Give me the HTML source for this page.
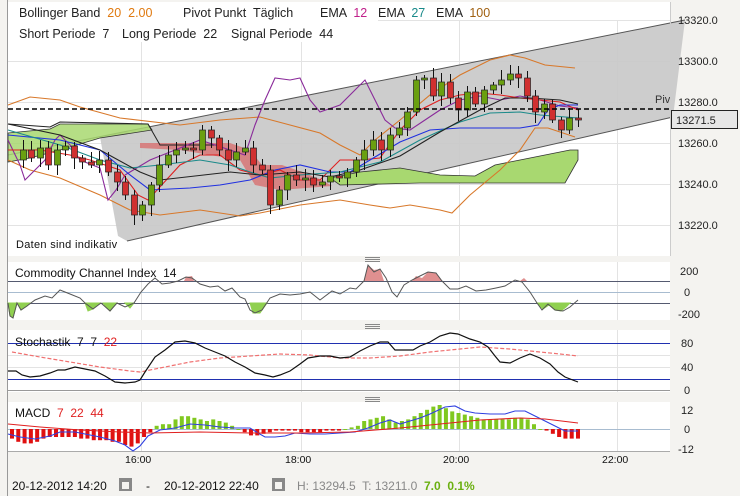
<!DOCTYPE html>
<html><head><meta charset="utf-8"><style>
html,body{margin:0;padding:0;background:#f4f3f0;width:740px;height:496px;overflow:hidden;font-family:"Liberation Sans",sans-serif}
svg{position:absolute;left:0;top:0}
text{white-space:pre}
</style></head><body>
<svg id="s" width="740" height="496" viewBox="0 0 740 496" font-family="Liberation Sans, sans-serif" xml:space="preserve">
<rect x="0" y="0" width="740" height="496" fill="#f4f3f0"/>
<line x1="7.5" y1="0" x2="7.5" y2="496" stroke="#999"/>
<rect x="8" y="2" width="662" height="254" fill="#fff"/>
<g stroke="#e3e3e3" stroke-width="1">
<line x1="8" y1="20.5" x2="670" y2="20.5"/><line x1="8" y1="61.5" x2="670" y2="61.5"/><line x1="8" y1="102.5" x2="670" y2="102.5"/><line x1="8" y1="143.5" x2="670" y2="143.5"/><line x1="8" y1="184.5" x2="670" y2="184.5"/><line x1="8" y1="225.5" x2="670" y2="225.5"/>
<line x1="141.5" y1="2" x2="141.5" y2="256"/><line x1="301.5" y1="2" x2="301.5" y2="256"/><line x1="459.5" y1="2" x2="459.5" y2="256"/><line x1="617.5" y1="2" x2="617.5" y2="256"/>
</g>
<polygon points="100,137 685,20 673,117 127,241 118,236" fill="#c8c8c8" fill-opacity="0.9"/>
<line x1="8" y1="155" x2="685" y2="20" stroke="#555" stroke-width="1"/>
<line x1="127" y1="241" x2="673" y2="117" stroke="#555" stroke-width="1"/>
<rect x="8" y="2" width="660" height="18" fill="#fff"/>
<rect x="8" y="20" width="370" height="22" fill="#fff"/>
<g font-size="12.5" fill="#222">
<text x="19" y="17">Bollinger Band  <tspan fill="#e07a10">20  2.00</tspan></text>
<text x="183" y="17">Pivot Punkt  Täglich</text>
<text x="320" y="17">EMA  <tspan fill="#c0208a">12</tspan></text>
<text x="378" y="17">EMA  <tspan fill="#1a8a8a">27</tspan></text>
<text x="436" y="17">EMA  <tspan fill="#a06010">100</tspan></text>
<text x="19" y="38">Short Periode  7</text>
<text x="122" y="38">Long Periode  22</text>
<text x="231" y="38">Signal Periode  44</text>
</g>
<polygon points="8,133 50,129 60,124 148,124 152,130 100,138 60,150 30,158 8,162" fill="#a8d870" fill-opacity="0.85" stroke="#333" stroke-width="0.8"/>
<polygon points="330,178 360,172 400,168 440,175 475,176 495,165 520,160 545,155 570,150 578,150 578,160 565,183 420,183 340,185" fill="#a8d870" stroke="#333" stroke-width="0.8"/>
<polygon points="140,143 230,143 250,150 262,165 282,165 302,172 322,180 332,186 280,190 255,185 240,160 180,150 140,148" fill="#d86a6a" fill-opacity="0.75"/>
<polyline points="8,124 50,127 60,122 148,124 160,145 220,145" fill="none" stroke="#222" stroke-width="1"/>
<g fill="none" stroke-width="1.1">
<polyline stroke="#d8782a" points="8,105 30,97 60,100 80,107 120,118 180,125 220,120 260,117 290,125 320,133 340,145 360,155 375,140 400,120 430,95 460,75 490,60 510,55 525,58 545,65 575,68"/>
<polyline stroke="#d8782a" points="8,160 30,170 60,178 100,195 130,210 160,215 200,210 240,216 260,213 300,205 340,200 370,205 390,208 410,205 440,210 452,213 470,195 500,170 520,150 535,128 548,128 575,137"/>
<polyline stroke="#8a2a9a" points="8,140 20,165 25,180 35,170 45,160 55,140 60,135 70,145 80,160 100,168 108,200 116,190 125,175 150,160 175,150 200,140 230,150 245,155 255,125 265,100 275,78 290,80 300,78 310,100 320,112 340,105 355,90 365,80 375,100 385,120 395,128 410,130 425,120 440,110 460,100 480,96 500,100 520,96 540,100 560,106 578,108"/>
<polyline stroke="#e02020" points="8,150 40,150 70,155 90,160 120,170 138,195 148,200 180,165 200,155 220,155 240,170 260,175 280,170 300,180 320,180 340,160 360,160 380,158 400,130 420,110 440,100 460,95 480,93 500,95 520,98 540,100 560,102 578,110"/>
<polyline stroke="#2030e0" points="8,135 60,140 100,150 130,175 150,190 190,188 220,185 250,180 275,170 300,165 330,172 350,172 370,160 400,142 430,130 460,128 490,128 520,128 538,125 548,110 560,105 578,105"/>
<polyline stroke="#1a8a8a" points="8,130 60,145 100,160 130,168 160,165 200,160 230,165 250,172 270,178 300,175 340,172 380,162 420,140 460,122 490,113 520,112 540,115 578,118"/>
<polyline stroke="#222" points="8,124 60,135 100,150 140,172 160,180 230,172 260,175 300,172 330,177 360,170 400,156 440,132 480,110 505,98 530,98 560,100 578,104"/>
</g>
<g id="candles"></g>
<line x1="8" y1="109" x2="670" y2="109" stroke="#000" stroke-width="1.6" stroke-dasharray="5,3"/>
<text x="655" y="103" font-size="11" fill="#333">Piv</text>
<text x="16" y="248" font-size="11" fill="#111" letter-spacing="0.3">Daten sind indikativ</text>
<line x1="670.5" y1="2" x2="670.5" y2="256" stroke="#ccc"/>
<g font-size="11" fill="#222">
<text x="678" y="24">13320.0</text><text x="678" y="65">13300.0</text><text x="678" y="106">13280.0</text><text x="678" y="147">13260.0</text><text x="678" y="188">13240.0</text><text x="678" y="229">13220.0</text>
</g>
<rect x="671.5" y="110.5" width="66" height="18" fill="#e6e6e6" stroke="#222"/>
<text x="676" y="124" font-size="11" fill="#222">13271.5</text>

<g stroke="#888"><line x1="365" y1="257.5" x2="380" y2="257.5"/><line x1="365" y1="259.5" x2="380" y2="259.5"/><line x1="365" y1="261.5" x2="380" y2="261.5"/></g>
<rect x="8" y="262" width="662" height="58" fill="#fff"/>
<g stroke="#e3e3e3"><line x1="141.5" y1="262" x2="141.5" y2="320"/><line x1="301.5" y1="262" x2="301.5" y2="320"/><line x1="459.5" y1="262" x2="459.5" y2="320"/><line x1="617.5" y1="262" x2="617.5" y2="320"/></g>
<line x1="8" y1="281.5" x2="670" y2="281.5" stroke="#555a70"/>
<line x1="8" y1="292.5" x2="670" y2="292.5" stroke="#a8bcd0"/>
<line x1="8" y1="303.5" x2="670" y2="303.5" stroke="#555a70"/>
<path d="M8,303 L10,316 L13,318 L17,303 L21,310 L27,306 L30,303Z M85,303 L88,311 L93,309 L97,305 L101,303Z M103,303 L106,307 L110,311 L114,306 L117,303Z M125,303 L130,308 L134,303Z M250,303 L253,313 L260,313 L267,303Z M537,303 L543,309 L549,305 L555,310 L561,311 L566,307 L570,303Z" fill="#90d050" stroke="#90d050"/>
<path d="M364,281 L368,265 L374,270 L380,269 L384,281Z M184,281 L186,277 L192,276 L194,281Z M412,281 L416,276 L422,278 L428,272 L436,273 L442,281Z M520,281 L524,278 L527,281Z" fill="#e09090"/>
<polyline fill="none" stroke="#555" stroke-width="1" points="8,303 10,316 13,318 17,303 21,310 27,306 35,300 45,296 52,298 60,290 70,294 80,298 85,303 93,309 101,303 110,311 117,303 125,307 134,303 141,292 148,284 155,278 162,284 170,283 178,281 186,277 192,278 200,284 210,287 218,286 225,291 232,288 240,297 245,299 250,310 255,313 262,310 270,298 280,294 290,295 300,294 310,292 320,300 332,291 340,294 350,288 356,289 364,281 368,265 374,272 380,269 386,278 392,292 397,297 404,285 412,280 420,276 428,272 436,273 442,281 450,289 458,289 466,286 476,291 486,290 496,288 505,286 515,280 522,282 530,292 537,303 542,310 548,304 555,310 563,311 570,307 578,300"/>
<g font-size="11" fill="#222"><text x="680" y="275">200</text><text x="684" y="296">0</text><text x="678" y="318">-200</text></g>
<text x="15" y="277" font-size="12" fill="#111">Commodity Channel Index  14</text>

<g stroke="#888"><line x1="365" y1="324.5" x2="380" y2="324.5"/><line x1="365" y1="326.5" x2="380" y2="326.5"/><line x1="365" y1="328.5" x2="380" y2="328.5"/></g>
<rect x="8" y="330" width="662" height="62" fill="#fff"/>
<g stroke="#e3e3e3"><line x1="141.5" y1="330" x2="141.5" y2="392"/><line x1="301.5" y1="330" x2="301.5" y2="392"/><line x1="459.5" y1="330" x2="459.5" y2="392"/><line x1="617.5" y1="330" x2="617.5" y2="392"/><line x1="8" y1="367.5" x2="670" y2="367.5"/><line x1="8" y1="355.5" x2="670" y2="355.5"/></g>
<line x1="8" y1="343.5" x2="670" y2="343.5" stroke="#2030b0"/>
<line x1="8" y1="379.5" x2="670" y2="379.5" stroke="#2030b0"/>
<line x1="8" y1="390.5" x2="670" y2="390.5" stroke="#999"/>
<polyline fill="none" stroke="#f07070" stroke-width="1.2" stroke-dasharray="4,2" points="12,352 40,357 70,362 100,367 130,371 140,372 160,368 190,362 220,358 250,356 280,354 310,355 340,358 370,358 400,356 430,352 460,349 480,347 510,349 540,352 560,354 578,356"/>
<polyline fill="none" stroke="#111" stroke-width="1.2" points="8,371 16,371 22,375 30,377 40,376 50,373 58,370 65,370 75,367 85,369 95,371 105,376 115,382 125,383 135,382 140,380 145,372 155,357 165,350 175,342 185,341 195,343 205,348 215,352 225,356 235,362 245,367 255,373 265,375 273,377 280,375 290,371 300,364 308,358 320,356 330,356 340,358 350,357 360,351 370,346 380,342 388,342 395,350 405,350 413,350 420,346 430,342 440,336 450,333 458,334 470,339 480,342 488,347 495,356 500,362 510,363 520,358 530,354 540,358 550,364 558,372 565,377 578,382"/>
<g font-size="11" fill="#222"><text x="681" y="347">80</text><text x="681" y="371">40</text><text x="684" y="394">0</text></g>
<text x="15" y="346" font-size="12" fill="#111">Stochastik  7  7  <tspan fill="#e02020">22</tspan></text>

<g stroke="#888"><line x1="365" y1="397.5" x2="380" y2="397.5"/><line x1="365" y1="399.5" x2="380" y2="399.5"/><line x1="365" y1="401.5" x2="380" y2="401.5"/></g>
<rect x="8" y="402" width="662" height="49" fill="#fff"/>
<g stroke="#e3e3e3"><line x1="141.5" y1="402" x2="141.5" y2="451"/><line x1="301.5" y1="402" x2="301.5" y2="451"/><line x1="459.5" y1="402" x2="459.5" y2="451"/><line x1="617.5" y1="402" x2="617.5" y2="451"/></g>
<line x1="8" y1="429.5" x2="670" y2="429.5" stroke="#a8bcd0"/>
<line x1="8" y1="451.5" x2="670" y2="451.5" stroke="#aaa"/>
<g id="macd"></g>
<polyline fill="none" stroke="#3040e0" stroke-width="1.1" points="8,434 20,437 35,439 50,436 60,432 75,432 90,435 100,437 115,441 125,445 133,451 140,446 148,436 160,430 175,428 190,424 205,425 220,427 235,428 250,428 258,433 265,437 275,437 285,436 295,433 310,434 325,434 340,433 355,432 368,428 380,423 390,420 400,424 410,421 420,418 430,414 445,407 455,406 465,411 475,413 490,414 505,414 515,411 525,411 535,416 545,421 555,426 565,431 578,431"/>
<polyline fill="none" stroke="#e02020" stroke-width="1.1" points="8,424 40,427 80,430 120,432 150,433 200,432 250,433 300,433 350,432 400,428 440,424 480,420 520,418 545,419 578,423"/>
<g font-size="11" fill="#222"><text x="681" y="414">12</text><text x="684" y="433">0</text><text x="678" y="453">-12</text></g>
<text x="15" y="417" font-size="12" fill="#111">MACD  <tspan fill="#e02020">7  22  44</tspan></text>

<g font-size="10.5" fill="#111"><text x="125" y="463">16:00</text><text x="285" y="463">18:00</text><text x="443" y="463">20:00</text><text x="602" y="463">22:00</text></g>
<g font-size="12" fill="#111">
<text x="12" y="490">20-12-2012 14:20</text>
<text x="146" y="490">-</text>
<text x="164" y="490">20-12-2012 22:40</text>
<text x="297" y="490" fill="#888">H: 13294.5  T: 13211.0  <tspan fill="#6ab010" font-weight="bold">7.0  0.1%</tspan></text>
</g>
<g fill="#888"><rect x="119" y="478" width="13" height="13"/><rect x="272" y="478" width="13" height="13"/></g>
<g fill="#f4f3f0"><rect x="122" y="482" width="7" height="7"/><rect x="275" y="482" width="7" height="7"/></g>
</svg>
<script>
(function(){
var NS="http://www.w3.org/2000/svg";
var g=document.getElementById("candles");
var c=[160,150,158,148,165,150,146,158,162,165,160,172,182,195,215,205,185,165,155,150,148,150,130,138,150,160,152,148,165,170,205,190,175,180,178,185,182,176,178,172,160,150,140,150,135,128,112,80,78,96,82,98,110,92,104,90,85,80,74,78,96,112,104,120,130,118,118];
var n=c.length,x0=14,dx=(578-14)/(n-1);
function el(t,a){var e=document.createElementNS(NS,t);for(var k in a)e.setAttribute(k,a[k]);g.appendChild(e);return e;}
for(var i=1;i<n;i++){
 var o=c[i-1],cl=c[i],x=Math.round(x0+i*dx)+0.5;
 var hi=Math.min(o,cl)-3-((i*7)%8),lo=Math.max(o,cl)+3+((i*5)%9);
 el("line",{x1:x,y1:hi,x2:x,y2:lo,stroke:"#111","stroke-width":1});
 var up=cl<o;var h=Math.max(2,Math.abs(o-cl));
 el("rect",{x:x-3,y:Math.min(o,cl),width:6,height:h,fill:up?"#6aa010":"#d03030",stroke:"#222","stroke-width":0.7});
}
var m=document.getElementById("macd");
var hv=[-6,-8,-9,-9,-8,-6,-5,-5,-5,-5,-5,-6,-6,-7,-7,-7,-8,-8,-10,-11,-9,-5,-2,2,3,3,6,8,8,7,6,5,6,5,4,2,0,-2,-4,-4,-3,-2,-1,-1,-1,-1,-2,-2,-2,-2,-1,-1,-1,0,1,2,5,6,7,8,6,4,5,6,8,10,12,14,15,13,11,10,9,8,7,6,6,6,6,6,7,7,6,3,0,-1,-3,-5,-6,-6,-6];
var nn=hv.length,mx0=12,mdx=(578-12)/(nn-1);
for(var j=0;j<nn;j++){var v=hv[j],xx=mx0+j*mdx,y0=429,hh=Math.abs(v)*1.6;
 var r=document.createElementNS(NS,"rect");
 r.setAttribute("x",xx-2);r.setAttribute("width",4);
 r.setAttribute("y",v>=0?y0-hh:y0);r.setAttribute("height",Math.max(hh,1));
 r.setAttribute("fill",v>=0?"#80c820":"#e01010");m.appendChild(r);}
})();
</script>
</body></html>
